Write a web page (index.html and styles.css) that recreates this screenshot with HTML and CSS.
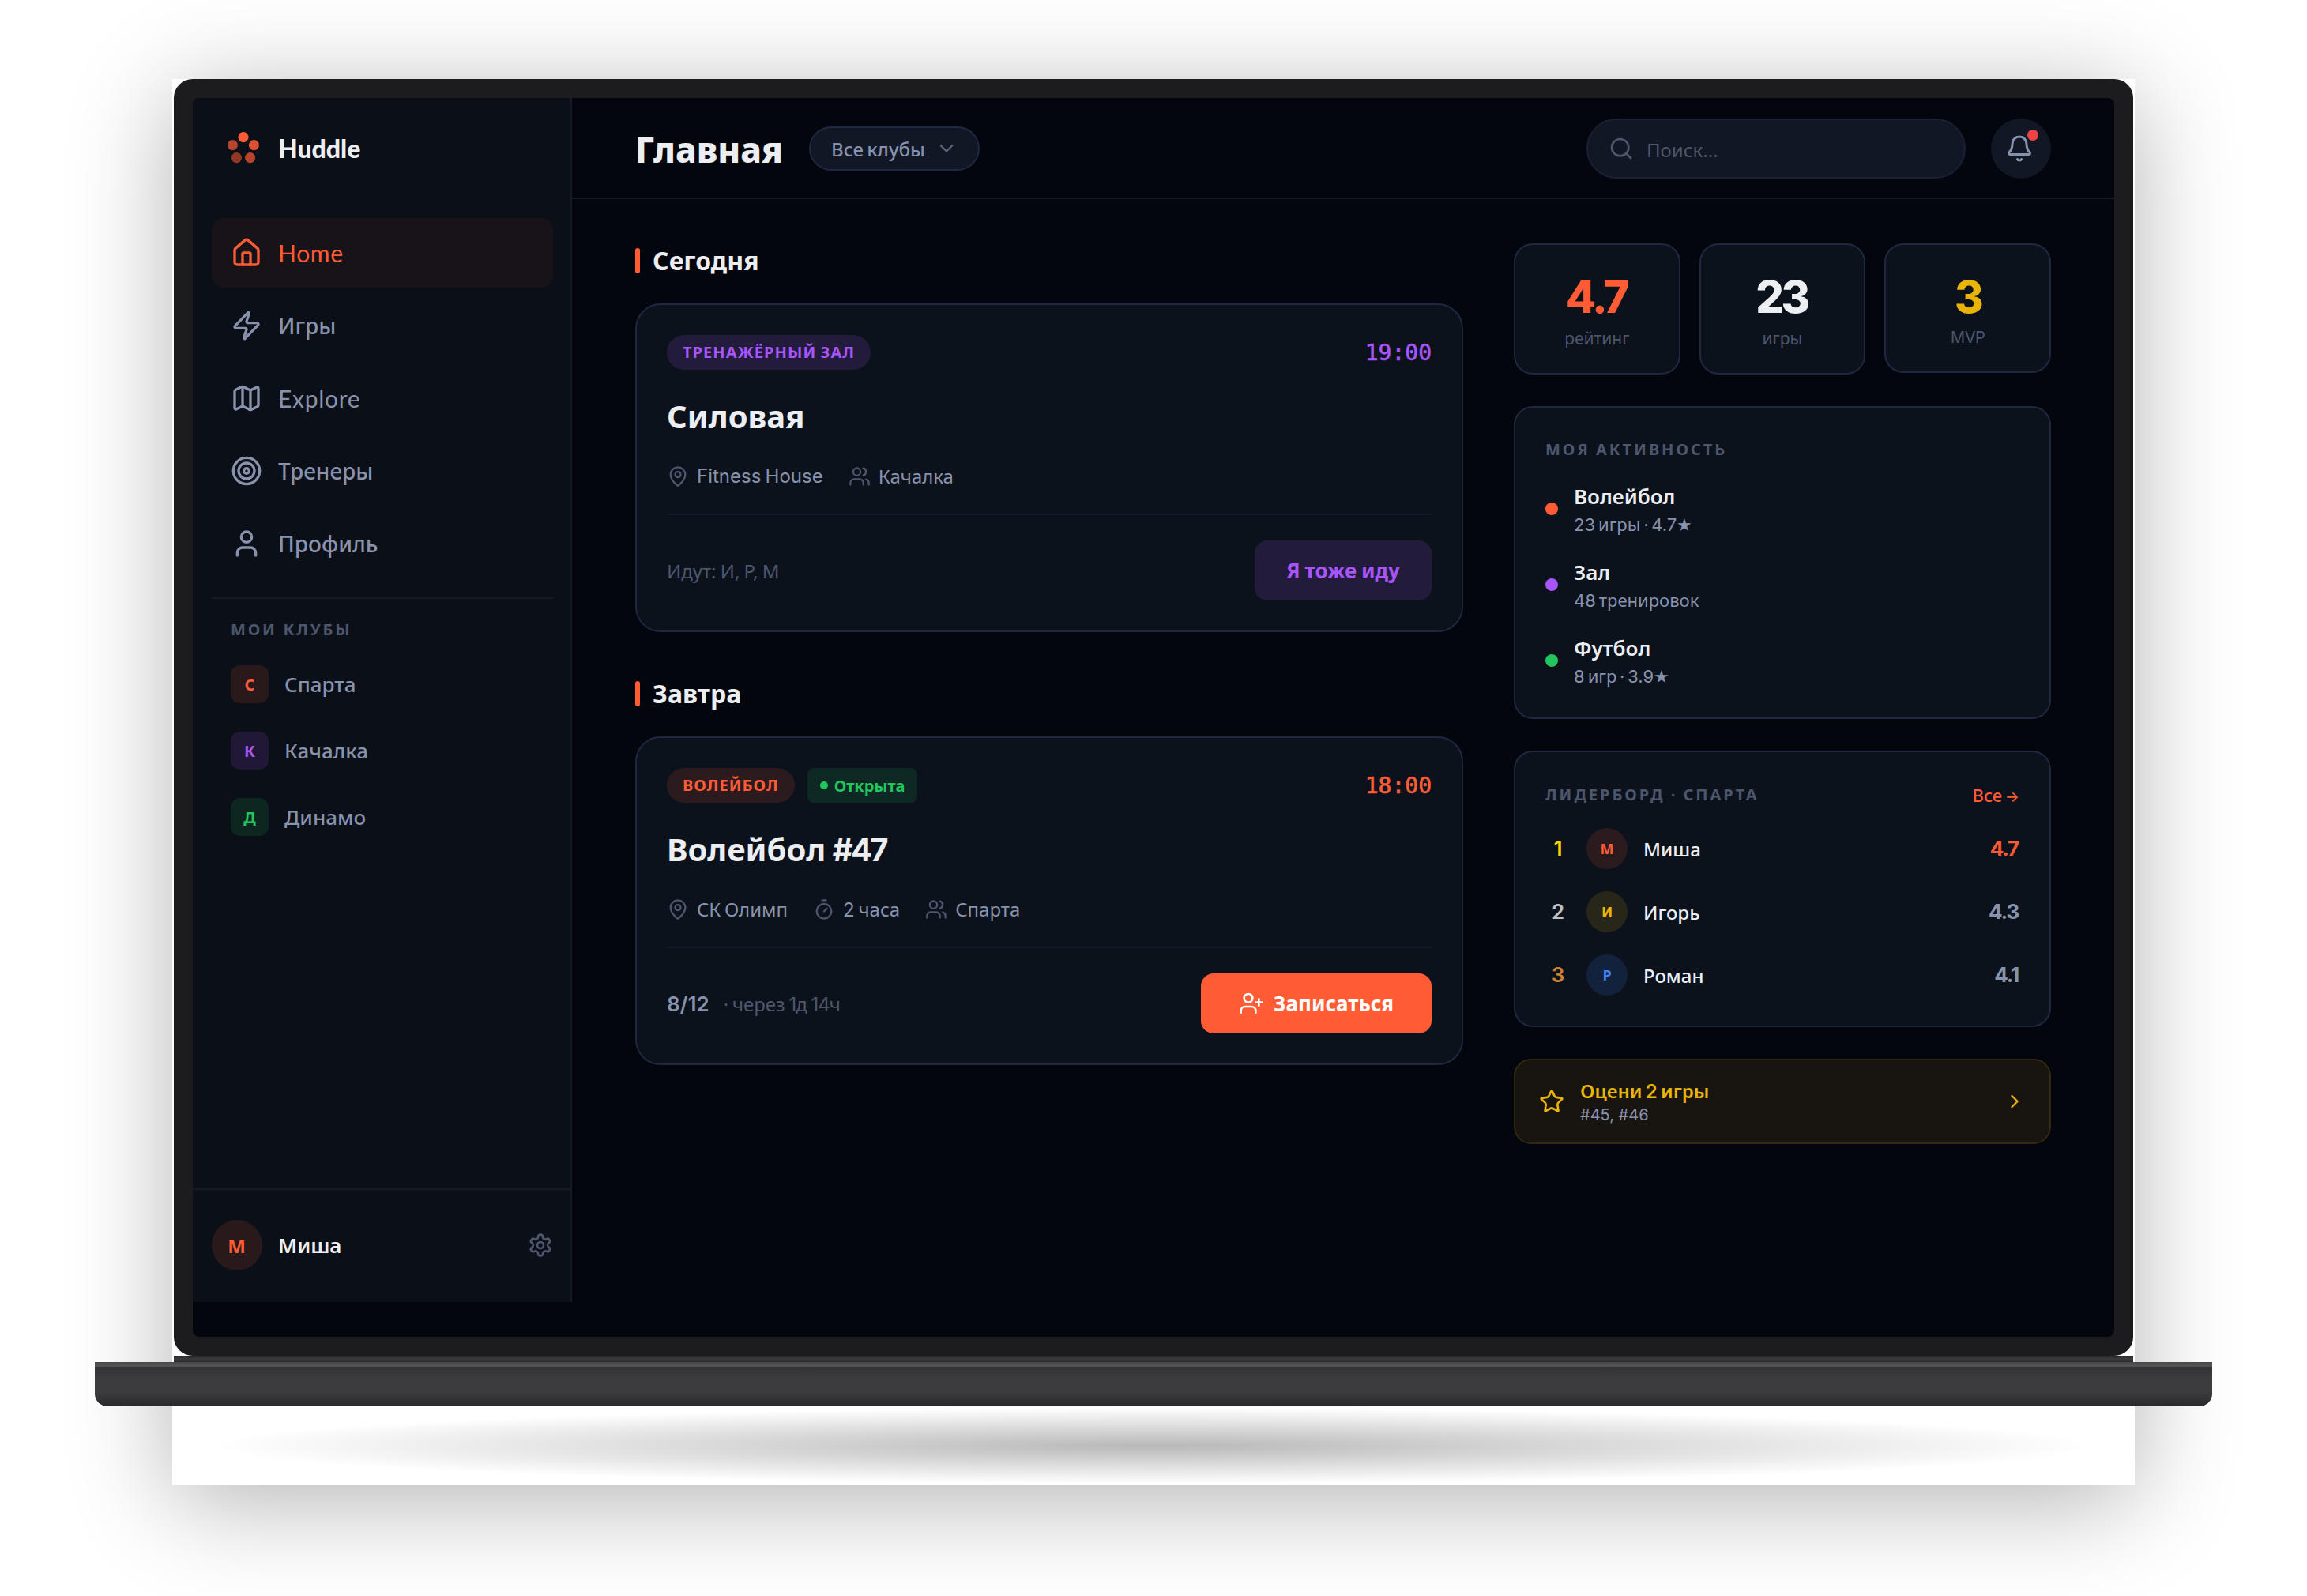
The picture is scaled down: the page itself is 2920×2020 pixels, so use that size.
FILE: index.html
```html
<!DOCTYPE html>
<html lang="ru">
<head>
<meta charset="utf-8">
<title>Huddle</title>
<link rel="stylesheet" href="styles.css">
</head>
<body>
<svg class="sprite" aria-hidden="true">
  <symbol id="i-home" viewBox="0 0 24 24"><path d="M15 21v-8a1 1 0 0 0-1-1h-4a1 1 0 0 0-1 1v8"/><path d="M3 10a2 2 0 0 1 .709-1.528l7-6a2 2 0 0 1 2.582 0l7 6A2 2 0 0 1 21 10v9a2 2 0 0 1-2 2H5a2 2 0 0 1-2-2z"/></symbol>
  <symbol id="i-zap" viewBox="0 0 24 24"><path d="M4 14a1 1 0 0 1-.78-1.63l9.9-10.2a.5.5 0 0 1 .86.46l-1.92 6.02A1 1 0 0 0 13 10h7a1 1 0 0 1 .78 1.63l-9.9 10.2a.5.5 0 0 1-.86-.46l1.92-6.02A1 1 0 0 0 11 14z"/></symbol>
  <symbol id="i-map" viewBox="0 0 24 24"><path d="M14.106 5.553a2 2 0 0 0 1.788 0l3.659-1.83A1 1 0 0 1 21 4.619v12.764a1 1 0 0 1-.553.894l-4.553 2.277a2 2 0 0 1-1.788 0l-4.212-2.106a2 2 0 0 0-1.788 0l-3.659 1.83A1 1 0 0 1 3 19.381V6.618a1 1 0 0 1 .553-.894l4.553-2.277a2 2 0 0 1 1.788 0z"/><path d="M15 5.764v15"/><path d="M9 3.236v15"/></symbol>
  <symbol id="i-target" viewBox="0 0 24 24"><circle cx="12" cy="12" r="10"/><circle cx="12" cy="12" r="6"/><circle cx="12" cy="12" r="2"/></symbol>
  <symbol id="i-user" viewBox="0 0 24 24"><path d="M19 21v-2a4 4 0 0 0-4-4H9a4 4 0 0 0-4 4v2"/><circle cx="12" cy="7" r="4"/></symbol>
  <symbol id="i-gear" viewBox="0 0 24 24"><path d="M12.22 2h-.44a2 2 0 0 0-2 2v.18a2 2 0 0 1-1 1.73l-.43.25a2 2 0 0 1-2 0l-.15-.08a2 2 0 0 0-2.73.73l-.22.38a2 2 0 0 0 .73 2.73l.15.1a2 2 0 0 1 1 1.72v.51a2 2 0 0 1-1 1.74l-.15.09a2 2 0 0 0-.73 2.73l.22.38a2 2 0 0 0 2.73.73l.15-.08a2 2 0 0 1 2 0l.43.25a2 2 0 0 1 1 1.73V20a2 2 0 0 0 2 2h.44a2 2 0 0 0 2-2v-.18a2 2 0 0 1 1-1.73l.43-.25a2 2 0 0 1 2 0l.15.08a2 2 0 0 0 2.73-.73l.22-.39a2 2 0 0 0-.73-2.73l-.15-.08a2 2 0 0 1-1-1.74v-.5a2 2 0 0 1 1-1.74l.15-.09a2 2 0 0 0 .73-2.73l-.22-.38a2 2 0 0 0-2.73-.73l-.15.08a2 2 0 0 1-2 0l-.43-.25a2 2 0 0 1-1-1.73V4a2 2 0 0 0-2-2z"/><circle cx="12" cy="12" r="3"/></symbol>
  <symbol id="i-down" viewBox="0 0 24 24"><path d="m6 9 6 6 6-6"/></symbol>
  <symbol id="i-right" viewBox="0 0 24 24"><path d="m9 18 6-6-6-6"/></symbol>
  <symbol id="i-search" viewBox="0 0 24 24"><circle cx="11" cy="11" r="8"/><path d="m21 21-4.34-4.34"/></symbol>
  <symbol id="i-bell" viewBox="0 0 24 24"><path d="M10.268 21a2 2 0 0 0 3.464 0"/><path d="M3.262 15.326A1 1 0 0 0 4 17h16a1 1 0 0 0 .74-1.673C19.41 13.956 18 12.499 18 8A6 6 0 0 0 6 8c0 4.499-1.411 5.956-2.738 7.326"/></symbol>
  <symbol id="i-pin" viewBox="0 0 24 24"><path d="M20 10c0 4.993-5.539 10.193-7.399 11.799a1 1 0 0 1-1.202 0C9.539 20.193 4 14.993 4 10a8 8 0 0 1 16 0"/><circle cx="12" cy="10" r="3"/></symbol>
  <symbol id="i-users" viewBox="0 0 24 24"><path d="M16 21v-2a4 4 0 0 0-4-4H6a4 4 0 0 0-4 4v2"/><circle cx="9" cy="7" r="4"/><path d="M22 21v-2a4 4 0 0 0-3-3.87"/><path d="M16 3.13a4 4 0 0 1 0 7.75"/></symbol>
  <symbol id="i-timer" viewBox="0 0 24 24"><path d="M10 2h4"/><path d="m12 14 3-3"/><circle cx="12" cy="14" r="8"/></symbol>
  <symbol id="i-plus" viewBox="0 0 24 24"><path d="M16 21v-2a4 4 0 0 0-4-4H6a4 4 0 0 0-4 4v2"/><circle cx="9" cy="7" r="4"/><path d="M19 8v6"/><path d="M22 11h-6"/></symbol>
  <symbol id="i-star" viewBox="0 0 24 24"><path d="M11.525 2.295a.53.53 0 0 1 .95 0l2.31 4.679a2.123 2.123 0 0 0 1.595 1.16l5.166.756a.53.53 0 0 1 .294.904l-3.736 3.638a2.123 2.123 0 0 0-.611 1.878l.882 5.14a.53.53 0 0 1-.771.56l-4.618-2.428a2.122 2.122 0 0 0-1.973 0L6.396 21.01a.53.53 0 0 1-.77-.56l.881-5.139a2.122 2.122 0 0 0-.611-1.879L2.16 9.795a.53.53 0 0 1 .294-.906l5.165-.755a2.122 2.122 0 0 0 1.597-1.16z"/></symbol>
</svg>

<div class="laptop">
  <div class="bezel">
    <div class="screen">
      <aside class="sidebar">
        <div class="brand">
          <svg class="logo" viewBox="0 0 24 24"><circle cx="12" cy="4.8" r="3.3"/><circle cx="18.7" cy="9.8" r="3.3" opacity=".85"/><circle cx="16.3" cy="17.8" r="3.3" opacity=".7"/><circle cx="7.7" cy="17.8" r="3.3" opacity=".55"/><circle cx="5.2" cy="9.8" r="3.3" opacity=".7"/></svg>
          <span class="brand-name">Huddle</span>
        </div>
        <nav class="nav">
          <a class="nav-item active"><svg class="icon i40"><use href="#i-home"/></svg><span class="nav-latin">Home</span></a>
          <a class="nav-item"><svg class="icon i40"><use href="#i-zap"/></svg><span>Игры</span></a>
          <a class="nav-item"><svg class="icon i40"><use href="#i-map"/></svg><span class="nav-latin">Explore</span></a>
          <a class="nav-item"><svg class="icon i40"><use href="#i-target"/></svg><span>Тренеры</span></a>
          <a class="nav-item"><svg class="icon i40"><use href="#i-user"/></svg><span>Профиль</span></a>
        </nav>
        <div class="clubs">
          <div class="clubs-title">МОИ КЛУБЫ</div>
          <div class="club"><b class="tile orange">С</b><span>Спарта</span></div>
          <div class="club"><b class="tile purple">К</b><span>Качалка</span></div>
          <div class="club"><b class="tile green">Д</b><span>Динамо</span></div>
        </div>
        <div class="account">
          <b class="avatar orange">М</b><span class="account-name">Миша</span>
          <svg class="icon i32 gear"><use href="#i-gear"/></svg>
        </div>
      </aside>

      <main class="main">
        <header class="topbar">
          <h1>Главная</h1>
          <button class="filter"><span>Все клубы</span><svg class="icon i28"><use href="#i-down"/></svg></button>
          <div class="search"><svg class="icon i32"><use href="#i-search"/></svg><span>Поиск...</span></div>
          <button class="bell"><svg class="icon i36"><use href="#i-bell"/></svg><i class="unread"></i></button>
        </header>

        <div class="content">
          <div class="feed">
            <section>
              <h2><i class="bar"></i><span>Сегодня</span></h2>
              <article class="card">
                <div class="card-top"><span class="tag purple">ТРЕНАЖЁРНЫЙ ЗАЛ</span><time class="t-purple">19:00</time></div>
                <h3>Силовая</h3>
                <div class="meta">
                  <div><svg class="icon i28"><use href="#i-pin"/></svg><span class="latin">Fitness House</span></div>
                  <div><svg class="icon i28"><use href="#i-users"/></svg><span>Качалка</span></div>
                </div>
                <div class="card-foot"><span class="muted">Идут: И, Р, М</span><button class="btn purple">Я тоже иду</button></div>
              </article>
            </section>
            <section>
              <h2><i class="bar"></i><span>Завтра</span></h2>
              <article class="card">
                <div class="card-top"><span class="tag orange">ВОЛЕЙБОЛ</span><span class="status"><i></i><span>Открыта</span></span><time class="t-orange">18:00</time></div>
                <h3>Волейбол <span class="num">#47</span></h3>
                <div class="meta">
                  <div><svg class="icon i28"><use href="#i-pin"/></svg><span>СК Олимп</span></div>
                  <div><svg class="icon i28"><use href="#i-timer"/></svg><span><span class="num">2</span> часа</span></div>
                  <div><svg class="icon i28"><use href="#i-users"/></svg><span>Спарта</span></div>
                </div>
                <div class="card-foot"><span class="count num">8/12</span><span class="muted left">· через <span class="num">1</span>д <span class="num">14</span>ч</span><button class="btn solid"><svg class="icon i32"><use href="#i-plus"/></svg><span>Записаться</span></button></div>
              </article>
            </section>
          </div>

          <div class="side">
            <div class="stats">
              <div class="stat"><strong class="t-orange">4.7</strong><span>рейтинг</span></div>
              <div class="stat"><strong>23</strong><span>игры</span></div>
              <div class="stat mvp"><strong class="t-gold">3</strong><span>MVP</span></div>
            </div>
            <div class="panel activity">
              <div class="panel-title">МОЯ АКТИВНОСТЬ</div>
              <div class="act"><i class="dot d-orange"></i><div><p>Волейбол</p><small><span class="num">23</span> игры · <span class="num">4.7</span>★</small></div></div>
              <div class="act"><i class="dot d-purple"></i><div><p>Зал</p><small><span class="num">48</span> тренировок</small></div></div>
              <div class="act"><i class="dot d-green"></i><div><p>Футбол</p><small><span class="num">8</span> игр · <span class="num">3.9</span>★</small></div></div>
            </div>
            <div class="panel leaders">
              <div class="leaders-head"><span class="panel-title">ЛИДЕРБОРД · СПАРТА</span><a class="all">Все <span class="arrow">→</span></a></div>
              <div class="leader"><span class="rank gold">1</span><b class="face orange">М</b><span class="who">Миша</span><span class="score t-orange">4.7</span></div>
              <div class="leader"><span class="rank silver">2</span><b class="face yellow">И</b><span class="who">Игорь</span><span class="score">4.3</span></div>
              <div class="leader"><span class="rank bronze">3</span><b class="face blue">Р</b><span class="who">Роман</span><span class="score">4.1</span></div>
            </div>
            <a class="callout">
              <svg class="icon i32"><use href="#i-star"/></svg>
              <div><p>Оцени <span class="num">2</span> игры</p><small class="num">#45, #46</small></div>
              <svg class="icon i28 go"><use href="#i-right"/></svg>
            </a>
          </div>
        </div>
      </main>
    </div>
  </div>
  <div class="hinge"></div>
  <div class="base"></div>
  <div class="ground"></div>
</div>
</body>
</html>
```
FILE: styles.css
```css
* { box-sizing: border-box; margin: 0; padding: 0; }

:root {
  --orange: #ff5c35;
  --purple: #a855f7;
  --green: #22c55e;
  --gold: #eab308;
  --text: #edeef2;
  --soft: #8892ad;
  --mute: #4d566d;
  --line: #141a2a;
  --edge: #1e2842;
}

body {
  width: 2920px;
  height: 2020px;
  overflow: hidden;
  background: #fff;
  color: var(--text);
  font-family: "Noto Sans", sans-serif;
}

button { border: 0; font: inherit; color: inherit; background: none; }
.sprite { position: absolute; width: 0; height: 0; }

.icon { flex: none; fill: none; stroke: currentColor; stroke-width: 2; stroke-linecap: round; stroke-linejoin: round; }
.i28 { width: 28px; height: 28px; }
.i32 { width: 32px; height: 32px; }
.i36 { width: 36px; height: 36px; }
.i40 { width: 40px; height: 40px; }

.latin { font-family: Inter, sans-serif; word-spacing: -1.5px; }
.num { font-family: Inter, sans-serif; }

.orange { color: var(--orange); background: rgba(255, 92, 53, .13); }
.purple { color: var(--purple); background: rgba(168, 85, 247, .14); }
.green { color: var(--green); background: rgba(34, 197, 94, .13); }
.yellow { color: var(--gold); background: rgba(234, 179, 8, .13); }
.blue { color: #3b82f6; background: rgba(59, 130, 246, .15); }
.t-orange { color: var(--orange); }
.t-purple { color: var(--purple); }
.t-gold { color: var(--gold); }

/* Laptop frame */
.laptop {
  display: flex;
  flex-direction: column;
  align-items: center;
  width: 2484px;
  height: 1780px;
  margin: 100px auto 0;
  background: #fff;
  box-shadow: 0 20px 120px rgba(0, 0, 0, .3);
}
.bezel { flex: none; width: 2480px; height: 1616px; padding: 24px; border-radius: 24px; background: #1c1c1e; }
.screen { display: flex; align-items: flex-start; height: 1568px; border-radius: 8px; overflow: hidden; background: #03060d; }
.hinge { flex: none; width: 2480px; height: 8px; background: linear-gradient(#2a2a2c, #3a3a3c 50%, #2a2a2c); }
.base {
  flex: none;
  width: 2680px;
  height: 56px;
  border-radius: 0 0 16px 16px;
  background: linear-gradient(#48484a 0, #565658 4px, #505052 6px, #323234 6px, #3c3c3e 20px, #3c3c3e 38px, #2a2a2c 55px, #251f26 56px);
}
.ground { width: 100%; height: 100px; background: radial-gradient(ellipse, rgba(0, 0, 0, .28), transparent 68%); }

/* Sidebar */
.sidebar { display: flex; flex-direction: column; flex: none; width: 480px; height: 1524px; border-right: 2px solid var(--line); background: #0b0f17; }
.brand { display: flex; align-items: center; gap: 20px; height: 128px; padding-left: 40px; }
.logo { width: 48px; height: 48px; fill: var(--orange); }
.brand-name { font: 900 32px/40px Lato, sans-serif; }
.nav { display: flex; flex-direction: column; gap: 4px; padding: 24px 22px 24px 24px; }
.nav-item { display: flex; align-items: center; gap: 20px; height: 88px; padding: 0 24px; border-radius: 16px; color: var(--soft); font-size: 28px; font-weight: 500; }
.nav-item.active { color: var(--orange); background: rgba(255, 92, 53, .05); }
.nav-latin { font-family: Lato, sans-serif; font-size: 30px; font-weight: 400; letter-spacing: .7px; }
.clubs { margin: 0 22px 0 24px; padding: 24px 24px 0; border-top: 2px solid var(--line); display: flex; flex-direction: column; gap: 36px; }
.clubs-title { margin-bottom: -6px; color: var(--mute); font-size: 20px; font-weight: 700; line-height: 30px; letter-spacing: 2.8px; }
.club { display: flex; align-items: center; gap: 20px; height: 48px; color: var(--soft); font-size: 26px; font-weight: 500; }
.tile { display: grid; place-items: center; width: 48px; height: 48px; border-radius: 12px; font-size: 20px; }
.account { display: flex; align-items: center; gap: 20px; height: 144px; margin-top: auto; padding: 0 22px 2px 24px; border-top: 2px solid var(--line); }
.avatar { display: grid; place-items: center; width: 64px; height: 64px; padding-right: 1px; border-radius: 50%; font-size: 24px; }
.account-name { font-size: 26px; font-weight: 600; }
.gear { margin-left: auto; color: var(--mute); }

/* Top bar */
.main { flex: 1; }
.topbar { display: flex; align-items: center; height: 128px; padding: 2px 80px 0; border-bottom: 2px solid var(--line); }
.topbar h1 { width: 188px; padding-top: 2px; font-size: 44px; font-weight: 800; line-height: 60px; white-space: nowrap; }
.filter { display: flex; align-items: center; justify-content: space-between; width: 216px; height: 56px; margin-left: 32px; padding: 0 26px; border: 2px solid var(--edge); border-radius: 28px; background: #111724; color: var(--soft); font-size: 24px; font-weight: 500; word-spacing: -2px; }
.filter span { padding-top: 1px; }
.search span { padding-top: 2px; }
.filter .icon { color: #5b647c; }
.search { display: flex; align-items: center; gap: 16px; width: 480px; height: 76px; margin-left: auto; padding: 0 26px; border: 2px solid #1a2036; border-radius: 38px; background: #111724; color: var(--mute); font-size: 24px; }
.bell { position: relative; display: grid; place-items: center; width: 76px; height: 76px; margin-left: 32px; padding-right: 4px; border-radius: 50%; background: #111724; color: var(--soft); }
.unread { position: absolute; left: 46px; top: 14px; width: 14px; height: 14px; border-radius: 50%; background: #ef4444; }

/* Feed */
.content { display: flex; align-items: flex-start; gap: 64px; padding: 56px 80px; }
.feed { display: flex; flex-direction: column; gap: 56px; width: 1048px; }
.feed h2 { display: flex; align-items: center; gap: 16px; height: 44px; margin-bottom: 32px; font-size: 32px; font-weight: 700; line-height: 44px; }
.bar { width: 6px; height: 32px; border-radius: 3px; background: var(--orange); }
.card { height: 416px; padding: 38px; border: 2px solid var(--edge); border-radius: 32px; background: #0c121c; }
.card-top { display: flex; align-items: center; gap: 16px; height: 44px; }
.tag { height: 44px; padding: 0 20px; border-radius: 22px; font-size: 20px; font-weight: 700; line-height: 44px; letter-spacing: 1.05px; word-spacing: -1px; }
.card-top time { margin-left: auto; padding-top: 2px; font: 28px/44px "DejaVu Sans Mono", monospace; -webkit-text-stroke: .6px; }
.status { display: flex; align-items: center; gap: 8px; height: 44px; padding: 0 16px; border-radius: 8px; color: var(--green); background: rgba(34, 197, 94, .13); font-size: 20px; font-weight: 700; }
.status i { width: 10px; height: 10px; border-radius: 50%; background: var(--green); }
.card h3 { height: 56px; margin-top: 31px; font-size: 40px; font-weight: 700; line-height: 56px; word-spacing: -2px; }
.card h3 .num { letter-spacing: -2.7px; }
.meta { display: flex; gap: 32px; height: 36px; margin-top: 29px; padding-top: 1px; color: var(--soft); font-size: 24px; line-height: 35px; word-spacing: -1.5px; }
.meta div { display: flex; align-items: center; gap: 10px; }
.meta .icon { color: var(--mute); }
.card-foot { display: flex; align-items: center; height: 110px; margin-top: 30px; padding-top: 32px; border-top: 2px solid var(--line); }
.muted { color: var(--mute); font-size: 24px; word-spacing: -1px; }
.count { color: var(--soft); font-size: 26px; font-weight: 600; }
.left { margin-left: 18px; word-spacing: -1.5px; }
.left .num { letter-spacing: -1px; }
.btn { display: flex; align-items: center; justify-content: center; gap: 12px; width: 224px; height: 76px; margin-left: auto; border-radius: 16px; font-size: 26px; font-weight: 700; word-spacing: -1px; }
.btn.solid { width: 292px; color: #fff; background: var(--orange); }

/* Right column */
.side { display: flex; flex-direction: column; gap: 40px; width: 680px; }
.stats { display: grid; grid-template-columns: repeat(3, 1fr); align-items: start; gap: 24px; }
.stat { display: flex; flex-direction: column; align-items: center; height: 166px; padding-top: 30px; border: 2px solid var(--edge); border-radius: 24px; background: #0c121c; }
.stat strong { margin-right: 2px; font: 800 56px/72px Inter, sans-serif; letter-spacing: -3.5px; }
.stat span { padding-top: 1px; color: var(--mute); font-size: 21px; line-height: 30px; }
.stat.mvp { height: 164px; }
.stat.mvp strong { margin-right: 0; }
.stat.mvp span { font-family: Inter, sans-serif; font-size: 20px; line-height: 28px; letter-spacing: -.5px; }
.panel { padding: 38px; border: 2px solid var(--edge); border-radius: 24px; background: #0c121c; }
.panel-title { color: var(--mute); font-size: 20px; font-weight: 700; line-height: 30px; letter-spacing: 2.95px; word-spacing: -1px; }
.activity { display: flex; flex-direction: column; gap: 24px; height: 396px; }
.act { display: flex; align-items: center; gap: 20px; height: 72px; }
.dot { width: 16px; height: 16px; border-radius: 50%; }
.d-orange { background: var(--orange); }
.d-purple { background: var(--purple); }
.d-green { background: var(--green); }
.act p { padding-top: 1px; font-size: 26px; font-weight: 600; line-height: 38px; }
.act small { display: block; color: var(--soft); font-size: 22px; line-height: 33px; word-spacing: -1.7px; }
.leaders { display: flex; flex-direction: column; gap: 28px; height: 350px; }
.leaders-head { display: flex; align-items: center; justify-content: space-between; height: 32px; margin-bottom: -2px; }
.all { color: var(--orange); font-size: 22px; font-weight: 500; word-spacing: -2px; }
.arrow { font-family: Inter, sans-serif; font-size: 19px; }
.leader { display: flex; align-items: center; gap: 20px; height: 52px; }
.rank { width: 32px; text-align: center; font: 600 26px/40px Inter, sans-serif; }
.gold { color: #ffd700; }
.silver { color: #c0c0c0; }
.bronze { color: #cd7f32; }
.face { display: grid; place-items: center; width: 52px; height: 52px; border-radius: 50%; font-size: 18px; }
.who { font-size: 24px; font-weight: 500; }
.score { margin-left: auto; padding-right: 1px; color: var(--soft); font: 700 26px/40px Inter, sans-serif; letter-spacing: -1.2px; }
.score.t-orange { color: var(--orange); }
.callout { display: flex; align-items: center; gap: 20px; height: 108px; padding: 0 30px; border: 2px solid #33290f; border-radius: 22px; background: #18140f; color: var(--gold); }
.callout p { font-size: 24px; font-weight: 600; line-height: 34px; word-spacing: -2px; }
.callout small { display: block; color: var(--soft); font-size: 20px; line-height: 25px; padding-bottom: 1px; }
.go { margin-left: auto; }
```
